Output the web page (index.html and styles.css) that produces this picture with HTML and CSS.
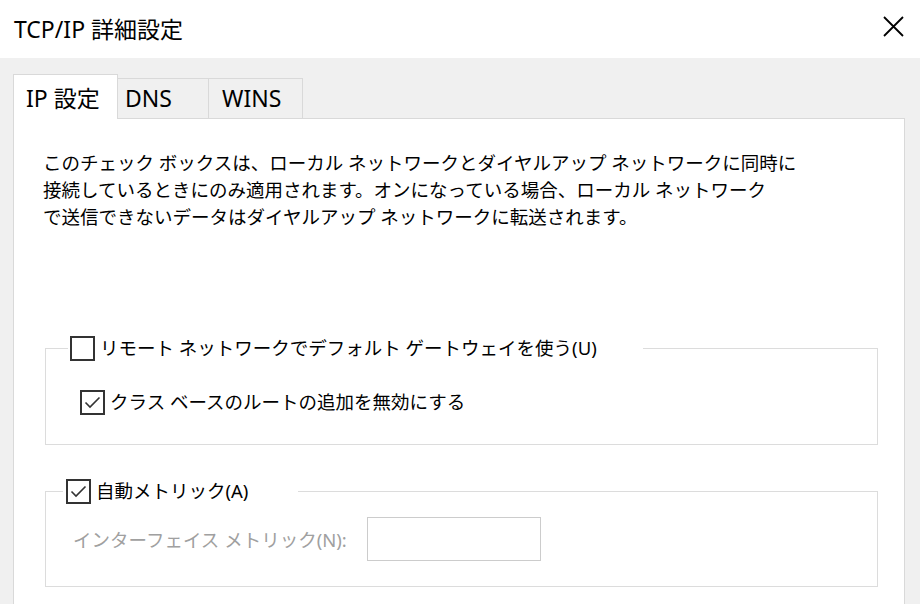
FILE: index.html
```html
<!DOCTYPE html>
<html lang="ja">
<head>
  <meta charset="UTF-8">
  <meta name="viewport" content="width=device-width, initial-scale=1.0">
  <title>TCP/IP 詳細設定</title>
  <link rel="stylesheet" href="styles.css">
</head>
<body>
  <div class="dialog">
      <header class="titlebar">
          <span class="title">TCP/IP 詳細設定</span>
          <svg class="close" viewBox="0 0 21 21"><path d="M1 1 L20 20 M20 1 L1 20"/></svg>
      </header>

      <div class="content">
          <div class="tabs">
              <div class="tab active">IP 設定</div>
              <div class="tab tab-dns">DNS</div>
              <div class="tab tab-wins">WINS</div>
          </div>

          <div class="panel">
              <p class="note">
                  <span>このチェック ボックスは、ローカル ネットワークとダイヤルアップ ネットワークに同時に</span>
                  <span>接続しているときにのみ適用されます。オンになっている場合、ローカル ネットワーク</span>
                  <span>で送信できないデータはダイヤルアップ ネットワークに転送されます。</span>
              </p>

              <fieldset class="group group-gateway">
                  <legend>
                      <label class="check"><span class="box"></span>リモート ネットワークでデフォルト ゲートウェイを使う(U)</label>
                  </legend>
                  <label class="check check-inner">
                      <span class="box"><svg viewBox="0 0 21 21"><path d="M3.5 10.5 L8 15 L17.5 5.5"/></svg></span>クラス ベースのルートの追加を無効にする
                  </label>
              </fieldset>

              <fieldset class="group group-metric">
                  <legend>
                      <label class="check"><span class="box"><svg viewBox="0 0 21 21"><path d="M3.5 10.5 L8 15 L17.5 5.5"/></svg></span>自動メトリック(A)</label>
                  </legend>
                  <div class="metric-row">
                      <span class="metric-label">インターフェイス メトリック(N):</span>
                      <span class="metric-input"></span>
                  </div>
              </fieldset>
          </div>
      </div>
  </div>
</body>
</html>
```

FILE: styles.css
```css
* {
    margin: 0;
    padding: 0;
    box-sizing: border-box;
}

body {
    width: 920px;
    height: 604px;
    overflow: hidden;
    font-family: "Noto Sans", "Noto Sans CJK JP", sans-serif;
    color: #000;
    background: #fff;
}

.titlebar {
    height: 58px;
    display: flex;
    align-items: center;
    justify-content: space-between;
    padding: 0 16px 0 14px;
    background: #fff;
}

.title {
    font-size: 23px;
    line-height: 31px;
}

.close {
    width: 21px;
    height: 21px;
    margin-bottom: 6px;
}

.close path {
    stroke: #000;
    stroke-width: 1.8;
    fill: none;
}

.content {
    height: 546px;
    background: #f0f0f0;
    padding: 16px 0 0 13px;
}

.tabs {
    display: flex;
    align-items: flex-end;
    height: 44px;
}

.tab {
    height: 40px;
    padding-top: 4px;
    font-size: 23px;
    line-height: 31px;
    white-space: nowrap;
    border: 1px solid #d9d9d9;
    border-left: none;
    border-bottom: none;
}

.tab.active {
    position: relative;
    width: 105px;
    height: 45px;
    padding: 8px 0 0 12px;
    margin-bottom: -1px;
    border-left: 1px solid #d9d9d9;
    background: #fff;
}

.tab-dns {
    width: 91px;
    padding-left: 7px;
}

.tab-wins {
    width: 94px;
    padding-left: 13px;
}

.panel {
    width: 892px;
    height: 500px;
    background: #fff;
    border: 1px solid #d9d9d9;
    padding: 30px 0 0 29px;
}

.note {
    font-size: 18.5px;
    line-height: 27px;
}

.note span {
    display: block;
    white-space: nowrap;
}

.group {
    width: 833px;
    margin-left: 2px;
    border: 1px solid #dcdcdc;
    font-size: 18.5px;
}

.group legend {
    line-height: 26px;
}

.group-gateway {
    margin-top: 105px;
    padding: 0 0 29px 22px;
}

.group-gateway legend {
    padding: 0 46px 0 2px;
}

.group-metric {
    margin-top: 33px;
    padding: 0 0 25px 17px;
}

.group-metric legend {
    padding: 0 50px 0 3px;
}

.check {
    display: flex;
    align-items: center;
    gap: 5px;
    line-height: 26px;
    white-space: nowrap;
}

.check-inner {
    margin: 28px 0 0 12px;
}

.box {
    flex: none;
    width: 25px;
    height: 25px;
    border: 2px solid #333;
    background: #fff;
}

.box svg {
    display: block;
    width: 21px;
    height: 21px;
}

.box path {
    stroke: #333;
    stroke-width: 1.6;
    fill: none;
}

.metric-row {
    display: flex;
    align-items: center;
    height: 44px;
    margin: 13px 0 0 10px;
}

.metric-label {
    width: 294px;
    color: #a0a0a0;
    white-space: nowrap;
}

.metric-input {
    width: 174px;
    height: 44px;
    border: 1px solid #cccccc;
    background: #fff;
}
```
